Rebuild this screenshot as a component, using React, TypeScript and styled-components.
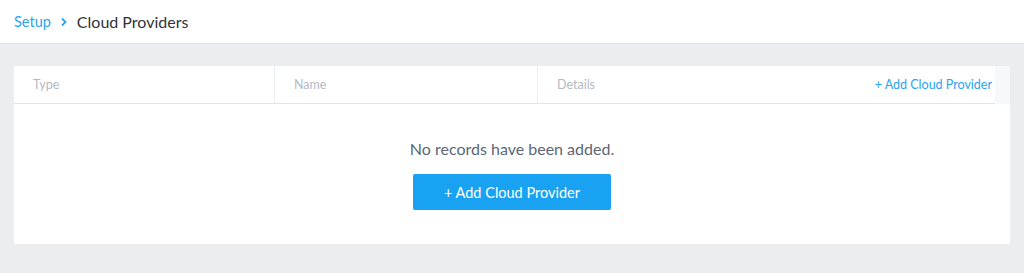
import styled, { createGlobalStyle } from 'styled-components';

const GlobalStyle = createGlobalStyle`
  html, body {
    margin: 0;
    padding: 0;
    background-color: #ebeef1;
    font-family: Lato, 'Open Sans', sans-serif;
  }
`;

const Page = styled.div`
  min-height: 273px;
  background-color: #ebeef1;
`;

const TopBar = styled.header`
  height: 43px;
  background-color: #ffffff;
  border-bottom: 1px solid #dfe3e8;
  display: flex;
  align-items: center;
  padding: 0 14px;
  gap: 8px;
`;

const Crumb = styled.a`
  color: #2aa4f0;
  font-size: 14.5px;
  text-decoration: none;
  cursor: pointer;
`;

const Chevron = styled.svg`
  width: 8px;
  height: 10px;
  margin: 0 1px;
`;

const Title = styled.h1`
  margin: 0;
  font-size: 16px;
  font-weight: 400;
  color: #2f3338;
`;

const Content = styled.main`
  padding: 22px 14px 28px;
`;

const Card = styled.section`
  background-color: #ffffff;
`;

const HeaderRow = styled.div`
  display: flex;
  height: 38px;
  background-color: #f7f8f9;
`;

const HeaderCells = styled.div`
  flex: 1;
  display: grid;
  grid-template-columns: 261px 263px 1fr auto;
  background-color: #ffffff;
  border-bottom: 1px solid #e1e4e8;
`;

const HeaderCell = styled.div<{ $divider?: boolean }>`
  display: flex;
  align-items: center;
  padding-left: 19px;
  font-size: 12.5px;
  color: #b4bac2;
  border-right: ${(p) => (p.$divider ? '1px solid #eceef1' : 'none')};
`;

const ScrollGap = styled.div`
  width: 15px;
`;

const HeaderLink = styled.a`
  display: flex;
  align-items: center;
  padding-right: 3px;
  font-size: 12.5px;
  color: #2aa4f0;
  cursor: pointer;
`;

const Empty = styled.div`
  display: flex;
  flex-direction: column;
  align-items: center;
  padding: 35px 0 34px;
  gap: 16px;
`;

const EmptyText = styled.p`
  margin: 0;
  font-size: 16px;
  line-height: 19px;
  color: #5b6775;
`;

const PrimaryButton = styled.button`
  width: 198px;
  height: 36px;
  border: none;
  border-radius: 2px;
  background-color: #19a2f1;
  color: #ffffff;
  font-family: inherit;
  font-size: 14.5px;
  cursor: pointer;
`;

const App = () => {
  return (
    <>
      <GlobalStyle />
      <Page>
        <TopBar>
          <Crumb>Setup</Crumb>
          <Chevron viewBox="0 0 8 10">
            <path d="M2 1.5 L5.5 5 L2 8.5" fill="none" stroke="#2aa4f0" strokeWidth="1.8" />
          </Chevron>
          <Title>Cloud Providers</Title>
        </TopBar>
        <Content>
          <Card>
            <HeaderRow>
              <HeaderCells>
                <HeaderCell $divider>Type</HeaderCell>
                <HeaderCell $divider>Name</HeaderCell>
                <HeaderCell>Details</HeaderCell>
                <HeaderLink>+ Add Cloud Provider</HeaderLink>
              </HeaderCells>
              <ScrollGap />
            </HeaderRow>
            <Empty>
              <EmptyText>No records have been added.</EmptyText>
              <PrimaryButton>+ Add Cloud Provider</PrimaryButton>
            </Empty>
          </Card>
        </Content>
      </Page>
    </>
  );
};

export default App;
